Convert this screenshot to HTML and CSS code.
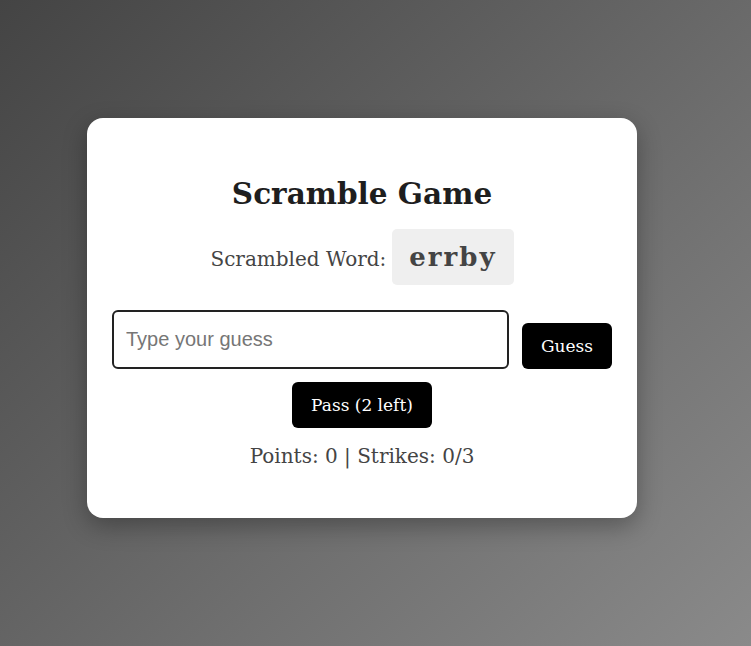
FILE: index.html
```html
<!DOCTYPE html>
<html>
<head>
<meta charset="utf-8">
<link rel="stylesheet" href="styles.css">
</head>
<body>
<main class="stage">
  <section class="card">
    <h1 class="title">Scramble Game</h1>
    <div class="word-row">
      <span class="word-label">Scrambled Word:</span>
      <span class="word">errby</span>
    </div>
    <div class="guess-row">
      <input class="guess-input" type="text" placeholder="Type your guess">
      <button class="btn">Guess</button>
    </div>
    <div class="pass-row">
      <button class="btn">Pass (2 left)</button>
    </div>
    <p class="score">Points: 0 | Strikes: 0/3</p>
  </section>
</main>
</body>
</html>
```
FILE: styles.css
```css
html, body {
  margin: 0;
  height: 100%;
}
body {
  background: linear-gradient(135deg, #444444 0%, #8a8a8a 100%);
  font-family: "DejaVu Serif", Georgia, serif;
}
.stage {
  box-sizing: border-box;
  min-height: 100%;
  display: flex;
  align-items: center;
  justify-content: center;
  padding: 0 27px 10px 0;
}
.card {
  box-sizing: border-box;
  width: 550px;
  height: 400px;
  background: #fff;
  border-radius: 16px;
  box-shadow: 0 8px 24px rgba(0, 0, 0, 0.3);
  padding: 57px 25px 0;
  text-align: center;
}
.title {
  margin: 0;
  font-size: 29.5px;
  line-height: 38px;
  color: #1e1e1e;
  font-weight: bold;
}
.word-row {
  margin-top: 16px;
  display: flex;
  justify-content: center;
  align-items: center;
  gap: 6px;
}
.word-label {
  font-size: 20px;
  color: #444;
  padding-top: 4px;
}
.word {
  background: #efefef;
  border-radius: 5px;
  padding: 0 17px;
  height: 56px;
  line-height: 56px;
  font-size: 26px;
  font-weight: bold;
  letter-spacing: 2px;
  color: #444;
}
.guess-row {
  margin-top: 25px;
  display: flex;
  align-items: flex-end;
  gap: 13px;
}
.guess-input {
  flex: 1;
  box-sizing: border-box;
  height: 59px;
  border: 2px solid #222;
  border-radius: 6px;
  padding: 0 12px;
  font-family: "Liberation Sans", Arial, sans-serif;
  font-size: 20px;
  color: #222;
  outline: none;
}
.guess-input::placeholder {
  color: #767676;
}
.btn {
  box-sizing: border-box;
  height: 46px;
  padding: 0 19px;
  background: #000;
  color: #fff;
  border: none;
  border-radius: 6px;
  font-family: "DejaVu Serif", Georgia, serif;
  font-size: 17px;
}
.pass-row {
  margin-top: 13px;
  display: flex;
  justify-content: center;
}
.score {
  margin: 16px 0 0;
  font-size: 20px;
  color: #444;
}
```
